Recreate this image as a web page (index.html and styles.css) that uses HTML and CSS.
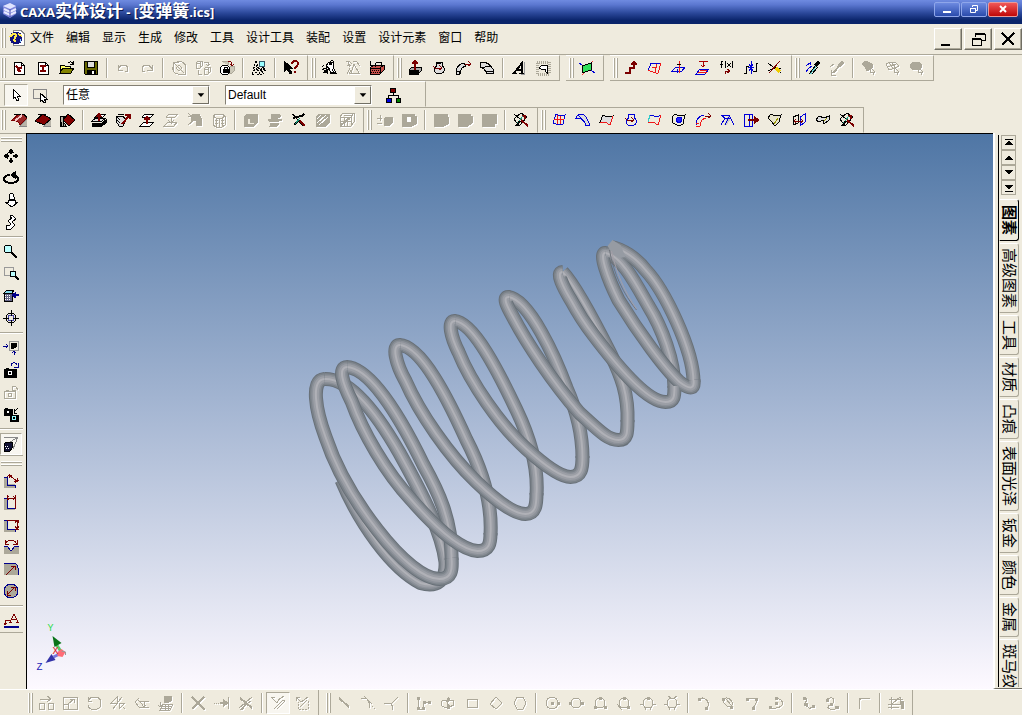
FILE: index.html
```html
<!doctype html>
<html lang="zh-CN">
<head>
    <meta charset="UTF-8">
    <meta name="viewport" content="width=device-width, initial-scale=1">
    <title>CAXA实体设计 - [变弹簧.ics]</title>
    <link rel="stylesheet" href="styles.css">
</head>
<body>
<header class="titlebar">
    <svg class="logo" viewBox="0 0 16 16"><path d="M1 4l7-3 6 3v8l-6 4-7-4z" fill="#7f86dc" stroke="none"/><path d="M1 4l7-3 6 3-6 3z" fill="#dfe4ff" stroke="none"/><path d="M2 7l6 3 6-3M2 10l6 3 6-3" stroke="#e8ebff" stroke-width="2"/><path d="M8 7v8" stroke="#4a4fae"/></svg>
    <h1><span>CAXA</span>实体设计<span> - [</span>变弹簧<span>.ics]</span></h1>
    <div class="winbtns">
        <button aria-label="最小化"><svg viewBox="0 0 16 12"><path d="M4 9h8" stroke-width="2"/></svg></button>
        <button aria-label="还原"><svg viewBox="0 0 16 12"><path d="M6.500 4V2.500h5v5H10M4.500 5.500h5v4h-5z"/><path d="M4 5.500h6"/></svg></button>
        <button class="close" aria-label="关闭"><svg viewBox="0 0 16 12"><path d="M5 3l6 6M11 3l-6 6" stroke-width="2"/></svg></button>
    </div>
</header>

<nav class="menubar">
    <span class="grip"></span>
    <svg class="ic" viewBox="0 0 16 16"><path d="M4 .5h8l3 3v12H4z" fill="#fff" stroke="#888"/><circle cx="7" cy="8" r="6" fill="#10107a" stroke="#10107a"/><path d="M1 7c3-4 6-4 6-2S4 9 6 12M9 4l4 2" stroke="#ffe94a" stroke-width="2"/><path d="M11 9v3" stroke="#8cf"/></svg>
    <ul class="menu">
        <li><a href="#">文件</a></li>
        <li><a href="#">编辑</a></li>
        <li><a href="#">显示</a></li>
        <li><a href="#">生成</a></li>
        <li><a href="#">修改</a></li>
        <li><a href="#">工具</a></li>
        <li><a href="#">设计工具</a></li>
        <li><a href="#">装配</a></li>
        <li><a href="#">设置</a></li>
        <li><a href="#">设计元素</a></li>
        <li><a href="#">窗口</a></li>
        <li><a href="#">帮助</a></li>
    </ul>
    <div class="docbtns">
        <button aria-label="最小化文档"><svg viewBox="0 0 20 16"><path d="M3 14h9" stroke-width="2"/></svg></button>
        <button aria-label="还原文档"><svg viewBox="0 0 20 16"><path d="M7 6V3h10v6h-4" /><path d="M7 3h10M4 8h9" stroke-width="2"/><path d="M4 8h9v6H4z"/></svg></button>
        <button aria-label="关闭文档"><svg viewBox="0 0 20 16"><path d="M4 2l12 12M16 2L4 14" stroke-width="2"/></svg></button>
    </div>
</nav>

<div class="row">
    <div class="bar" role="toolbar">
        <span class="grip"></span>
        <button aria-label="新建设计"><svg class="ic"><path class="fw" d="M3 2h7l3 3v9H3z"/><path d="M10 2v3h3"/><path class="r" d="M5 6l3 3 3-2M6 10l4 1M8 9v3" stroke-width="2"/></svg></button>
        <button aria-label="新建图纸"><svg class="ic"><path class="fw" d="M3 2h7l3 3v9H3z"/><path d="M10 2v3h3"/><path class="r" d="M5 6h6M5 11h6M8 6v5" stroke-width="2"/></svg></button>
        <button aria-label="打开"><svg class="ic"><path fill="#ff6" d="M1 13V5h4l1 1h5v3"/><path fill="#848400" d="M1 13l3-5h11l-3 5z"/><path d="M9 3c2-2 4-1 5 1M14 1v3h-3"/></svg></button>
        <button aria-label="保存"><svg class="ic"><path fill="#666600" d="M1 1h13v13H2l-1-1z"/><path fill="#ddd" d="M4 1h7v6H4z"/><path class="fk" d="M4 10h8v4H4z"/><path stroke="#fff" stroke-width="2" d="M10 11v3"/></svg></button>
        <i class="sep"></i>
        <button class="off" aria-label="撤销"><svg class="ic"><path d="M3 5v5h5M3 9c3-6 10-4 10 0 0 2-1 3-3 3"/></svg></button>
        <button class="off" aria-label="重做"><svg class="ic"><path d="M13 5v5H8M13 9C10 3 3 5 3 9c0 2 1 3 3 3"/></svg></button>
        <i class="sep"></i>
        <button class="off" aria-label="更新"><svg class="ic"><path d="M2 8V2h6M3 3l10 10M6 2c6-2 10 3 8 7M2 7c-1 5 3 8 8 7M14 8v6H8"/><path d="M5 8l3 3 3-3-3-3z"/></svg></button>
        <button class="off" aria-label="替换"><svg class="ic"><path d="M1 3l2-2h4v5l-2 2H1zM1 3h4l2-2M5 3v5M9 9l2-2h4v5l-2 2H9zM9 9h4l2-2M13 9v5M9 2h4v3M11 4l2 2 2-2M3 10v4h4"/></svg></button>
        <button aria-label="锁定"><svg class="ic"><path stroke="#aca899" fill="#ccc8b8" d="M3 2l2-1h4v4M10 8l2-2h3v5l-2 2h-3z"/><path class="r" d="M9 1c3 0 4 1 4 4M11 4l2 2 2-2"/><circle class="fw" cx="6" cy="10" r="5"/><path class="fk" d="M4 9h5v3H4z"/><path d="M5 9V7h3v2"/></svg></button>
        <i class="sep"></i>
        <button aria-label="查找"><svg class="ic"><path d="M5 1L1 14M5 1l4 13M3 9l3 5M7 9l-3 5M1 14h3M6 14h5M10 8l3 6M5 5v5" stroke-dasharray="2 1"/><path d="M8 8l5 6"/><circle cx="11" cy="4" r="3" fill="#9ff" stroke="#356"/><path d="M12 7l2 4" stroke-width="2"/></svg></button>
        <i class="sep"></i>
        <button aria-label="帮助指针"><svg class="ic"><path class="fk" d="M1 1v11l3-3 3 5 2-1-3-5h3z"/><path class="r" d="M9 4c0-4 6-4 6 0 0 2-3 2-3 5M12 11v2" stroke-width="2"/></svg></button>
    </div>
    <div class="bar" role="toolbar">
        <span class="grip"></span>
        <button aria-label="智能图素"><svg class="ic"><path class="fw" d="M5 6l3-4 4 1v4l3 6h-5l-2-4-3 2z"/><path d="M9 2l2-2 2 2-1 3M5 6l4 3M3 5L1 7M1 10l3-2 2 2M2 13l4-1M6 10l1 4M11 9l2 4"/><path d="M8 4h3M3 11h3M9 13h6" stroke-width="2"/></svg></button>
        <button class="off" aria-label="三维球"><svg class="ic"><path d="M1 2l3-1 3 3M2 5l4 1M9 4l5 9H6zM8 1l4 1 3 4M2 14l3-6M4 14l2-4M3 2l2 5"/></svg></button>
        <button aria-label="附着点"><svg class="ic"><path fill="#c8504a" d="M1 8l4-3h10v5l-4 4H1z"/><path d="M1 8h10l4-3M11 8v6M6 7V4l2-2h4v4"/><path d="M1 1v4h3"/><path d="M1 10h9M2 12h9" stroke-dasharray="1 1"/></svg></button>
    </div>
    <div class="bar" role="toolbar">
        <span class="grip"></span>
        <button aria-label="拉伸"><svg class="ic"><path fill="#aaa" d="M2 10l3-3h9v4l-3 3H2z"/><path class="fk" d="M2 10h9v4H2z"/><path class="r" d="M8 10V2M5 4l3-3 3 3" stroke-width="2"/></svg></button>
        <button aria-label="旋转"><svg class="ic"><path fill="#ddd" d="M5 2h6v3l2 3c1 3-1 6-5 6-3 0-6-2-4-6l2-3z"/><path d="M5 2c2 2 4 2 6 0"/><path class="r" d="M2 6c2 3 5 3 8 2M8 5l3 3-3 2"/></svg></button>
        <button aria-label="扫描"><svg class="ic"><path fill="#ddd" d="M1 13c0-5 3-9 8-10l2 3c-4 1-6 4-6 8l-3 1z"/><path d="M1 12l3-1 1 3"/><path class="r" d="M10 4h5M13 1l3 3-3 2"/></svg></button>
        <button aria-label="放样"><svg class="ic"><path fill="#ddd" d="M1 3c5-2 9 0 13 6l1 4-7 1C6 10 5 8 1 7z"/><path d="M4 8c3-2 5-2 8-1M7 12c3-2 5-1 8 0"/></svg></button>
        <i class="sep"></i>
        <button aria-label="文字"><svg class="ic"><path stroke="#999" d="M13 2v12h-3"/><path d="M3 13L11 3v10M6 10h5" stroke-width="2"/><path d="M1 13h5M8 13h5"/></svg></button>
        <button aria-label="加厚"><svg class="ic"><path stroke="#aca899" stroke-width="3" stroke-dasharray="1 1" d="M2 2h12v12H2z"/><path class="fw" d="M4 8l3-3h5v8l-2-2V9H6z"/></svg></button>
    </div>
    <div class="bar gap" role="toolbar">
        <span class="grip"></span>
        <button aria-label="二维草图"><svg class="ic"><path class="b" d="M0 3l16 10"/><path d="M14 1L3 15" stroke="#f33"/><path fill="#2fe05a" d="M3 6l9-3v7l-9 3z"/></svg></button>
    </div>
    <div class="bar gap" role="toolbar">
        <span class="grip"></span>
        <button aria-label="三维曲线"><svg class="ic"><path class="r" d="M2 13h5V8h4V3M8 5l3-3 3 3" stroke-width="2"/></svg></button>
        <button aria-label="曲面"><svg class="ic"><path class="b" d="M1 11L4 3l4 1 6-1"/><path class="red" d="M1 11c3-1 6 3 10 2l3-10M5 7h4V4M8 12l2-8"/></svg></button>
        <button aria-label="投影曲线"><svg class="ic"><path class="b" d="M1 11l4-4h9l-3 4zM6 13V9"/><path class="red" d="M8 1v12"/><path d="M6 4h4"/></svg></button>
        <button aria-label="等参数线"><svg class="ic"><path d="M4 1h9M8 2v5M6 5l2 2 2-2" stroke="#a00"/><path class="b" d="M1 14l4-5h9l-4 5z"/><path class="red" d="M3 12h9M5 10h7"/></svg></button>
        <button aria-label="公式曲线"><svg class="ic"><path d="M2 8V2l2-1M1 4h3M7 1L6 4l1 4M8 3l4 4M12 3L8 7M13 1l1 3-1 4"/><path class="r" d="M6 14v-3h4M8 9l3 2-3 2"/></svg></button>
        <button aria-label="组合曲线"><svg class="ic"><path d="M1 13h2V6h3M10 11h3V3h2"/><path class="b" d="M8 1v4M8 14v-4M6 4l2 3 2-3M6 11l2-3 2 3M5 7h6"/></svg></button>
        <button aria-label="裁剪曲线"><svg class="ic"><path d="M1 3l13 10M1 11l8-4M14 9l-5-1"/><path class="r" d="M13 1L2 13"/><path stroke="#ec0" stroke-width="3" d="M9 8l4 4"/></svg></button>
    </div>
    <div class="bar" role="toolbar">
        <span class="grip"></span>
        <button aria-label="拾取"><svg class="ic"><path class="b" d="M1 6l4-3M3 9l4-3M5 2v3M1 12l3-4"/><path stroke="#6cc" stroke-width="2" d="M5 14l6-8"/><path d="M4 14l7-9M7 14l6-7"/><path stroke-width="3" d="M10 6l4-4"/></svg></button>
        <button class="off" aria-label="应用"><svg class="ic"><path d="M1 7l4-3M2 10v5h5"/><path stroke-width="2" d="M4 13l8-9"/><path stroke-width="3" d="M10 6l4-4"/></svg></button>
        <i class="sep"></i>
        <button class="off" aria-label="选择体"><svg class="ic"><path class="fg" d="M1 4l4-3 6 3v4l-5 3-2-4z"/><path d="M9 7l5 5-2 1 1 2M9 7v6l3-1"/></svg></button>
        <button class="off" aria-label="选择面"><svg class="ic"><path d="M1 4l4-2 6 1 3 3-4 2-6 2zM4 3l4 5M2 7l9-3M6 2l5 6M9 7l5 5-2 1 1 2M9 7v6l3-1"/></svg></button>
        <button class="off" aria-label="选择边"><svg class="ic"><ellipse class="fg" cx="7" cy="6" rx="6" ry="4"/><path d="M9 7l5 5-2 1 1 2M9 7v6l3-1"/></svg></button>
    </div>
</div>

<div class="row">
    <div class="bar picks" role="toolbar">
        <button class="on" aria-label="选择"><svg class="ic"><path class="fw" d="M5 2v10l2-2 2 4 2-1-2-4h3z"/></svg></button>
        <button aria-label="框选"><svg class="ic"><path stroke="#888" d="M1 2h13v9H1z"/><path class="fw" d="M8 6v9l2-2 2 3 2-1-2-3h3z"/></svg></button>
        <span class="combo">
            <select aria-label="选择过滤"><option>任意</option></select>
            <span class="drop"><svg viewBox="0 0 16 16"><path class="fk" stroke="none" d="M5 6h7L8.500 10z"/></svg></span>
        </span>
        <span class="combo">
            <select aria-label="配置"><option>Default</option></select>
            <span class="drop"><svg viewBox="0 0 16 16"><path class="fk" stroke="none" d="M5 6h7L8.500 10z"/></svg></span>
        </span>
        <button aria-label="设计树"><svg class="ic"><path d="M8 5v3M3 11V8h10v3"/><path fill="#800000" d="M5 1h5v4H5z"/><path fill="#0000e0" d="M1 11h5v4H1z"/><path fill="#008000" d="M11 11h4v4h-4z"/></svg></button>
    </div>
</div>

<div class="row row3">
    <div class="bar" role="toolbar">
        <span class="grip"></span>
        <button aria-label="圆角过渡"><svg class="ic"><path fill="#b8b4a8" d="M9 14l7-7v7z" stroke="#888"/><path fill="#9c2828" stroke="#7b0000" d="M0 9l8-7h5l3 4-7 7c-1-4-4-5-9-4z"/><path d="M3 2h10M13 2l3 4"/><path stroke="#f3c8c8" stroke-width="2" d="M4 9l7-6"/></svg></button>
        <button aria-label="边倒角"><svg class="ic"><path fill="#b8b4a8" d="M9 14l7-7v7z" stroke="#888"/><path fill="#840000" d="M0 9l8-7 8 5-7 6z"/><path d="M3 2h8M0 9l9 4"/></svg></button>
        <button aria-label="面拔模"><svg class="ic"><path fill="#b8b4a8" d="M1 4v10h6l-3-5V4z"/><path fill="#840000" d="M4 8l5-6 7 6-6 6z"/><path d="M1 4h7M2 10v4M4 11v3"/></svg></button>
        <i class="sep"></i>
        <button aria-label="拉伸面"><svg class="ic"><path fill="#ddd" d="M1 9l4-3h10l-4 3z"/><path class="fk" d="M1 11h10l4-3v3l-4 3H1z"/><path class="fw" d="M4 5l3-3h8l-3 3z"/><path class="r" d="M8 9V3M6 5l2-3 2 3" stroke-width="2"/></svg></button>
        <button aria-label="拉伸曲面"><svg class="ic"><path fill="#ddd" d="M1 4h7l3 4-3 6H4L1 9z"/><path d="M1 4l4 4M1 7l4 4M3 2h6"/><path class="r" d="M7 12l7-8M10 3h5v4" stroke-width="2"/></svg></button>
        <button aria-label="移动面"><svg class="ic"><path class="fw" d="M1 14l4-4h10l-4 4zM3 5l3-3h9l-4 4z"/><path class="r" d="M8 12V6M5 8l3-3 3 3" stroke-width="2"/></svg></button>
        <button class="off" aria-label="匹配面"><svg class="ic"><path d="M1 14l4-4h9l-3 4zM3 5l3-3h9l-4 4zM8 12V6M5 8l3 3 3-3"/></svg></button>
        <button class="off" aria-label="等距面"><svg class="ic"><path class="fg" d="M5 3l7-1 2 4v7H9V9L4 8z"/><path d="M1 1l13 13M1 13L12 4M1 4h4"/></svg></button>
        <button class="off" aria-label="删除面"><svg class="ic"><path d="M2 4l3-2h6l3 2v9l-3 2H5l-3-2zM2 4l3 2h6l3-2M5 6v9M11 6v9M8 6v9"/><path d="M2 8h12M2 11h12" stroke-dasharray="1 1"/></svg></button>
        <i class="sep"></i>
        <button class="off" aria-label="抽壳"><svg class="ic"><path class="fg" d="M1 5l3-3h10v9l-3 3H1z"/><path fill="#efebde" d="M4 6h3v4h4v2H4z"/></svg></button>
        <button class="off" aria-label="截面"><svg class="ic"><path class="fg" d="M4 2h8l2 2-3 2H4zM1 7h12l2 1-3 1H2zM4 11h8l-2 3H3z"/></svg></button>
        <button aria-label="裁剪"><svg class="ic"><path d="M1 2l4 3 2 4 5 5"/><path d="M2 6l8-2M10 5l3-3M3 13l5-5" stroke-width="2"/><path class="r" d="M14 14l-5-5" stroke-width="2"/><path class="g" d="M4 12l5-6"/></svg></button>
        <button class="off" aria-label="分割"><svg class="ic"><path class="fg" d="M1 5l3-3h10v9l-3 3H1z"/><path stroke="#fff" d="M2 11l9-8M4 13l9-8M2 7l4-4"/></svg></button>
        <button class="off" aria-label="布尔"><svg class="ic"><path d="M1 5l3-4h11v9l-3 4H1zM1 5h11v9M12 5l3-4M5 5v9M8 5v9M1 9h11M5 3h8"/><path d="M2 13l9-7" stroke-width="2"/></svg></button>
    </div>
    <div class="bar" role="toolbar">
        <span class="grip"></span>
        <button class="off" aria-label="加减"><svg class="ic"><path d="M0 6h5M3 3v6M0 11h5"/><path class="fg" d="M7 7l2-2h6v6l-2 2H7z"/></svg></button>
        <button class="off" aria-label="相交"><svg class="ic"><path class="fg" d="M1 2h12v2h2v8l-4 2H1z"/><path fill="#fff" stroke="none" d="M6 5h4v5H6z"/></svg></button>
        <i class="sep"></i>
        <button class="off" aria-label="并"><svg class="ic"><path class="fg" d="M1 2h13l1 3v7l-4 2H1z"/></svg></button>
        <button class="off" aria-label="差"><svg class="ic"><path class="fg" d="M1 2h12v2h2v7l-4 3H1z"/></svg></button>
        <button class="off" aria-label="交"><svg class="ic"><path class="fg" d="M1 2h14v9h-2v3H1z"/></svg></button>
        <i class="sep"></i>
        <button aria-label="编辑特征"><svg class="ic"><path d="M1 7l7-6 6 4-8 9zM1 2l6 5"/><path class="r" d="M15 14L8 8M9 4h3v3" stroke-width="2"/><path class="g" d="M4 12l6-8"/><path d="M3 14l4-5" stroke-width="2"/></svg></button>
    </div>
    <div class="bar" role="toolbar">
        <span class="grip"></span>
        <button aria-label="直纹面"><svg class="ic"><path class="b" d="M2 11L5 2l4 2 5-1-2 9-4 1z"/><path class="red" d="M7 3L6 12M3 7l10 1M10 4l-1 8"/></svg></button>
        <button aria-label="网格面"><svg class="ic"><path class="b" d="M1 6c2-5 7-5 10-1l4 8-4 1c-1-6-5-8-10-8z" fill="#ddd"/><path class="b" d="M3 3l8 9"/></svg></button>
        <button aria-label="放样面"><svg class="ic"><path fill="#ddd" d="M1 10L4 3l4 2 6-1-3 9-5-3z"/><path class="red" d="M14 4l-3 9-5-3-5 0"/></svg></button>
        <button aria-label="旋转面"><svg class="ic"><path class="b" d="M5 2h6v3l2 3c1 3-1 6-5 6-3 0-6-2-4-6l2-3z"/><path class="r" d="M2 6c2 3 5 3 8 2M8 5l3 3-3 2"/></svg></button>
        <button aria-label="边界面"><svg class="ic"><path stroke="#3cc" d="M1 10L3 3"/><path class="b" d="M3 3l4 1 3 1 4-2"/><path class="red" d="M14 3l-3 10-5-3-5 1"/></svg></button>
        <button aria-label="填充面"><svg class="ic"><path d="M1 5l3-3 4 2 6-1-2 9-4 2-6-3z"/><path class="b" fill="#22f" d="M6 6l4-1 1 4-3 2-3-2z"/></svg></button>
        <button aria-label="导动面"><svg class="ic"><path class="b" d="M1 13c0-5 3-9 8-10"/><path class="red" d="M11 6c-4 1-6 4-6 8l-4 1M1 12l3-1"/><path class="r" d="M10 4h5M13 1l3 3-3 2"/></svg></button>
        <button aria-label="延伸面"><svg class="ic"><path fill="#ccc" stroke="none" d="M5 13L9 4l3 2-4 7z"/><path class="b" d="M2 3h8l5 10M2 3l4 3-4 7M6 6h5M6 13l4-8"/></svg></button>
        <button aria-label="偏移面"><svg class="ic"><path class="b" d="M1 2h8v12H1zM6 2v12"/><path class="r" d="M5 8h9M11 5l4 3-4 3" stroke-width="2"/></svg></button>
        <button aria-label="裁剪面"><svg class="ic"><path fill="#e8e4cc" d="M1 6l3-4 4 2 6-1-2 7-4 4-3-4z"/><path stroke="#990" d="M7 12l4-6"/></svg></button>
        <button aria-label="合并面"><svg class="ic"><path d="M2 13V5l5-2v8z"/><path class="b" d="M9 5l5-3v8l-5 4z"/><path class="r" d="M3 9h9M5 7L3 9l2 2M10 7l2 2-2 2"/></svg></button>
        <button aria-label="缝合面"><svg class="ic"><path fill="#ddd" d="M1 8l3-4 5 2 5-2v4l-5 4-1-4-4 2z"/><path stroke="#990" d="M9 9l3-3"/></svg></button>
        <button aria-label="编辑面"><svg class="ic"><path d="M1 7l7-6 6 4-8 9zM1 2l6 5"/><path class="r" d="M15 14L8 8M9 4h3v3" stroke-width="2"/><path class="g" d="M4 12l6-8"/><path d="M3 14l4-5" stroke-width="2"/></svg></button>
    </div>
</div>

<main class="work">
    <aside class="rail">
        <div class="vbar" role="toolbar">
            <span class="vgrip"></span>
            <button aria-label="平移"><svg class="ic"><path class="fk" d="M8 1l2 3H6zM8 15l2-3H6zM1 8l3-2v4zM15 8l-3-2v4z"/><path d="M8 3v3M8 10v3M3 8h3M10 8h3" stroke-width="2"/></svg></button>
            <button aria-label="动态旋转"><svg class="ic"><path d="M7 5C3 5 1 7 1 9c0 2 3 4 7 4s7-2 7-4c0-2-1-3-3-4" stroke-width="2"/><path class="fk" d="M8 5l4-3v6z"/></svg></button>
            <button aria-label="前后缩放"><svg class="ic"><path class="fw" d="M6 5c0-5 5-5 5 0v2H6zM5 8h7v2h3l-6 5-7-5h3z"/></svg></button>
            <button aria-label="任意视向"><svg class="ic"><path class="fw" d="M7 5V2l2-1 4 4-4 3 3 3-4 4H3v-3l4-1 1-1-3-3 4-3-1-1z"/></svg></button>
            <i class="hsep"></i>
            <button aria-label="动态缩放"><svg class="ic"><circle cx="5" cy="5" r="4" fill="#bff"/><path d="M8 8l6 6" stroke-width="2"/></svg></button>
            <button aria-label="窗口缩放"><svg class="ic"><path stroke="#999" d="M1 1h9v8H1z"/><circle cx="10" cy="8" r="3" fill="#bff"/><path d="M12 10l4 4" stroke-width="2"/></svg></button>
            <button aria-label="指定面"><svg class="ic"><path fill="#8de" d="M1 5l3-3h7L9 5z"/><path fill="#668" d="M1 5h8v8H1z"/><path stroke="#fff" stroke-dasharray="1 1" d="M2 7h6M2 9h6M2 11h6"/><path class="nb" d="M11 7h5M13 5l-3 2 3 3" stroke-width="2"/></svg></button>
            <button aria-label="目标"><svg class="ic"><circle cx="8" cy="8" r="5"/><circle cx="8" cy="8" r="3" stroke="#44a"/><path d="M8 0v6M8 10v6M0 8h6M10 8h6"/></svg></button>
            <i class="hsep"></i>
            <button aria-label="显示全部"><svg class="ic"><path stroke="#999" d="M6 1h9v9H6z"/><path class="fk" d="M8 4l2-1h3v4l-2 1H8z"/><path class="nb" d="M0 6h5M3 4l2 2-2 2M11 15v-4M9 13l2-2 2 2"/></svg></button>
            <button aria-label="保存视向"><svg class="ic"><path class="fk" d="M1 7h12v8H1z"/><path d="M3 6h3"/><circle cx="7" cy="11" r="2" stroke="#fff"/><path class="nb" d="M8 4c0-4 5-4 6-1M15 1v4h-4"/></svg></button>
            <button class="off" aria-label="恢复视向"><svg class="ic"><path d="M1 7h11v7H1zM3 6h3M9 2v4h4M9 5c0-4 6-3 5 1"/><circle cx="7" cy="11" r="2"/></svg></button>
            <button aria-label="取回视向"><svg class="ic"><path class="fk" d="M1 3h8v6H1zM7 9h9v6H7z"/><path d="M2 2h3M15 2l-4 4M11 3v4h3"/><circle cx="5" cy="6" r="1" stroke="#fff"/><circle cx="11" cy="12" r="2" stroke="#9ff"/></svg></button>
            <i class="hsep"></i>
            <button class="on" aria-label="透视"><svg class="ic"><path stroke="#888" d="M1 1h14M15 1L4 8M15 1l-5 12"/><path fill="#113" d="M1 8l2-2h6v6l-2 3H1z"/><path stroke="#fff" stroke-dasharray="1 1" d="M2 10h4M3 12h4"/></svg></button>
        </div>
        <div class="vbar dims" role="toolbar">
            <span class="vgrip"></span>
            <button aria-label="智能标注"><svg class="ic"><path class="fs" d="M1 4h3v7h8v4H1z"/><path class="nb" d="M1 4h3v8h8v3"/><path class="r" d="M4 4l3-3M12 10l4-3M6 2l8 6M6 5V2h3M11 8h3V5"/></svg></button>
            <button aria-label="水平标注"><svg class="ic"><path class="fs" d="M1 3h3v10h8v2H1z"/><path class="nb" d="M1 3h3v10h8"/><path class="r" d="M4 0v5M12 0v14M4 3h8M6 1L4 3l2 2M10 1l2 2-2 2"/></svg></button>
            <button aria-label="垂直标注"><svg class="ic"><path class="fs" d="M1 3h3v9h8v3H1z"/><path class="nb" d="M1 3h3v9h8v3"/><path class="r" d="M4 3h12M12 12h4M14 3v9M12 6l2-3 2 3M12 9l2 3 2-3"/></svg></button>
            <button aria-label="角度标注"><svg class="ic"><path class="fs" d="M1 7h3l4 5 4-5h4v8H1z"/><path class="nb" d="M1 7h3l4 5 4-5h4"/><path class="r" d="M2 5c3-5 9-5 12 0M2 1v4h4M14 1v4h-4"/></svg></button>
            <button aria-label="半径标注"><svg class="ic"><path class="fs" d="M1 2h9c3 0 5 2 5 5v7H1z"/><path class="nb" d="M1 2h9c3 0 5 2 5 5v7"/><path class="r" d="M3 14l9-9M8 5h4v4"/></svg></button>
            <button aria-label="直径标注"><svg class="ic"><circle class="fs nb" cx="8" cy="8" r="7"/><path class="r" d="M4 12l8-8M8 4h4v4M4 8v4h4"/></svg></button>
            <i class="hsep"></i>
            <button aria-label="文字注释"><svg class="ic"><path class="nb" d="M1 14h15" stroke-width="2"/><path class="r" d="M7 9l4-8 4 8M8 6h6M6 9h3M13 9h3M8 7H2v5M1 10l1 2 2-2"/></svg></button>
        </div>
    </aside>

    <section class="view">
        <svg class="scene" viewBox="28 134 965 555">
            <defs>
                <path id="start" d="M342 480C360 523 392 568 421 583C438 588 447 580 446 562C443 535 425 498 400 453C380 418 352 378 325 379"/>
                <g id="backs">
                    <path d="M452 560C453 520 438 490 424 465C407 430 374 368 347 367"/>
                    <path d="M491 535C493 500 481 467 467 440C449 400 422 346 400 345"/>
                    <path d="M537 495C539 465 529 435 517 410C500 374 474 322 455 321"/>
                    <path d="M583 458C583 430 576 408 567 388C556 358 530 300 509 297"/>
                    <path d="M628 422C629 395 622 376 611 354C600 332 578 288 563 272"/>
                    <path d="M675 388C675 360 662 327 649 306C638 287 622 255 606 253"/>
                    <path d="M694 382C694 350 665 290 646 270C636 257 622 249 612 247"/>
                </g>
                <g id="fronts">
                    <path d="M325 379C311 380 316 410 326 437C337 470 356 502 378 530C402 561 425 579 440 579C452 579 453 570 452 558"/>
                    <path d="M348 367C338 367 343 383 352 401C363 432 386 472 412 500C440 532 462 550 478 551C490 551 491 543 491 533"/>
                    <path d="M401 345C391 344 397 365 406 381C420 413 449 455 477 482C500 504 516 514 526 514C536 514 537 505 537 493"/>
                    <path d="M456 321C447 320 452 338 459 352C471 382 500 425 527 449C548 468 562 477 571 477C582 477 583 468 583 456"/>
                    <path d="M510 297C502 296 508 307 513 316C527 343 553 382 580 413C600 431 608 440 619 440C628 440 628 432 628 420"/>
                    <path d="M563 272C556 272 564 288 572 301C580 316 587 326 594 335C619 368 648 402 666 402C675 402 675 396 675 386"/>
                    <path d="M606 253C599 252 608 278 619 300C640 334 665 368 680 382C692 391 695 388 694 380"/>
                </g>
            </defs>
            <g class="tube">
                <use href="#start" class="t1"/><use href="#start" class="t2"/><use href="#start" class="t3"/><use href="#start" class="t4"/><use href="#start" class="t5"/>
            </g>
            <g class="tube">
                <use href="#backs" class="t1"/><use href="#backs" class="t2"/><use href="#backs" class="t3"/><use href="#backs" class="t4"/><use href="#backs" class="t5"/>
            </g>
            <g class="tube">
                <use href="#fronts" class="t1"/><use href="#fronts" class="t2"/><use href="#fronts" class="t3"/><use href="#fronts" class="t4"/><use href="#fronts" class="t5"/>
            </g>
            <path d="M608 246l5-6 8 5 5 12-6 1-7-4z" fill="#969ba3" stroke="none"/>
            <path d="M610 250c4 24 14 44 27 60" stroke="#70747c"/>
            <path d="M612 251c5 22 13 41 25 58" stroke="#a49fa7"/>
            <g class="axes">
                <path d="M63 654l-7-11" stroke="#55cc66" stroke-width="3"/>
                <path d="M53 636l9 7-7 4z" fill="#087318" stroke="none"/>
                <path d="M62 653l-8 4" stroke="#7777dd" stroke-width="3"/>
                <path d="M46 663l6-9 4 6z" fill="#3434a8" stroke="none"/>
                <path d="M58 652l4-3 4 3-3 5-5-1z" fill="#ff6b76" stroke="none"/>
                <path d="M62 651l4 1v3" stroke="#999"/>
                <text x="48" y="631" fill="#2fdc4a">Y</text>
                <text x="53" y="654" fill="#d8101c">X</text>
                <text x="37" y="670" fill="#1c1cb8">Z</text>
            </g>
        </svg>
    </section>

    <aside class="catalog">
        <div class="tabnav">
            <button aria-label="第一个"><svg viewBox="0 0 12 12"><path d="M2 2h8"/><path class="fk" stroke="none" d="M6 3l4 5H2z"/></svg></button>
            <button aria-label="上一个"><svg viewBox="0 0 12 12"><path class="fk" stroke="none" d="M6 3l4 5H2z"/></svg></button>
            <button aria-label="下一个"><svg viewBox="0 0 12 12"><path class="fk" stroke="none" d="M6 8l4-5H2z"/></svg></button>
            <button aria-label="最后一个"><svg viewBox="0 0 12 12"><path class="fk" stroke="none" d="M6 8l4-5H2z"/><path d="M2 9h8"/></svg></button>
        </div>
        <div class="tabs" role="tablist">
            <button role="tab" class="cur">图素</button>
            <button role="tab">高级图素</button>
            <button role="tab">工具</button>
            <button role="tab">材质</button>
            <button role="tab">凸痕</button>
            <button role="tab">表面光泽</button>
            <button role="tab">钣金</button>
            <button role="tab">颜色</button>
            <button role="tab">金属</button>
            <button role="tab">斑马纹</button>
        </div>
    </aside>
</main>

<footer class="row sketch">
    <div class="bar" role="toolbar">
        <span class="grip"></span>
        <button class="off" aria-label="移动"><svg class="ic"><path d="M1 8h5v6H1zM10 8h5v6h-5zM2 4h10M9 1l4 3-4 3"/></svg></button>
        <button class="off" aria-label="缩放"><svg class="ic"><path d="M1 2h14v12H1zM1 9h5v5M6 9l6-5M8 4h4v4"/></svg></button>
        <button class="off" aria-label="旋转草图"><svg class="ic"><path d="M2 2v4h4M2 6c3-6 13-5 13 2 0 8-12 9-13 2"/></svg></button>
        <button class="off" aria-label="镜像"><svg class="ic"><path d="M3 14L12 2M1 8l6-6v6zM9 8h6l-6 6zM13 12l2 2"/></svg></button>
        <button class="off" aria-label="偏置"><svg class="ic"><path d="M1 7l4-4M1 7l4 5h10M6 6h9M10 6v6M8 10l2 2 2-2M4 5l5 5"/></svg></button>
        <button class="off" aria-label="投影"><svg class="ic"><path class="fg" d="M6 2l2-1h5v5l-2 1H6z"/><path d="M2 7v5M0 10l2 2 2-2M5 9h10l-3 6H2zM4 11h10M3 13h10M7 9v6M10 9v6"/></svg></button>
        <i class="sep"></i>
        <button class="off" aria-label="打断"><svg class="ic"><path d="M2 2l13 13M14 2L2 14" stroke-width="2"/></svg></button>
        <button class="off" aria-label="延长"><svg class="ic"><path d="M14 2v12"/><path d="M0 8h6" stroke-dasharray="1 1"/><path d="M6 8h8M9 5l4 3-4 3" stroke-width="2"/></svg></button>
        <button class="off" aria-label="裁剪草图"><svg class="ic"><path d="M1 13L14 2M5 12l8-6"/><path d="M2 3l6 5 6 5M3 15l6-7" stroke-width="2"/></svg></button>
        <i class="sep"></i>
        <button class="off on" aria-label="显示曲线尺寸"><svg class="ic"><path d="M2 3l5 5 3-5M1 2h4M10 4l4-3M4 14l9-9M7 14l8-8M12 5h3"/></svg></button>
        <button class="off" aria-label="显示端点"><svg class="ic"><path d="M2 2l5 5 7-5M2 2h4M2 2v4"/><path d="M14 6v8H4V7M4 14l9-9" stroke-dasharray="2 1"/></svg></button>
    </div>
    <div class="bar wide" role="toolbar">
        <span class="grip"></span>
        <button class="off" aria-label="两点线"><svg class="ic"><path d="M3 3l10 9" stroke-width="2"/></svg></button>
        <button class="off" aria-label="切线"><svg class="ic"><path d="M1 3h5c3 3 4 7 4 10M4 1l8 8"/><path d="M12 11l3 3" stroke-dasharray="1 2"/></svg></button>
        <button class="off" aria-label="法线"><svg class="ic"><path d="M0 8h5c3 1 4 3 4 7M7 9l7-7"/></svg></button>
        <i class="sep"></i>
        <button class="off" aria-label="连续直线"><svg class="ic"><path d="M2 3v11h5V7h8"/><path stroke-width="3" d="M1 3h3M1 13h3M6 13h3M7 7h3M12 7h3"/></svg></button>
        <button class="off" aria-label="连续圆弧"><svg class="ic"><path d="M7 12H4c-4-1-3-7 0-7s5 3 3 7M7 8c0-4 7-4 7 0s-6 4-6 1M8 2v5"/><path stroke-width="3" d="M7 4h3M7 12h3"/></svg></button>
        <button class="off" aria-label="矩形"><svg class="ic"><path d="M3 4h10v8H3z"/></svg></button>
        <button class="off" aria-label="三点矩形"><svg class="ic"><path d="M2 9l6-7 6 6-6 6z"/></svg></button>
        <button class="off" aria-label="多边形"><svg class="ic"><path d="M5 2h6l3 6-3 6H5L2 8z"/></svg></button>
        <i class="sep"></i>
        <button class="off" aria-label="圆心半径"><svg class="ic"><circle cx="8" cy="8" r="6"/><path stroke-width="3" d="M7 8h3M13 8h3"/></svg></button>
        <button class="off" aria-label="两点圆"><svg class="ic"><circle cx="8" cy="8" r="5"/><path stroke-width="3" d="M1 8h3M12 8h4"/></svg></button>
        <button class="off" aria-label="三点圆"><svg class="ic"><circle cx="8" cy="8" r="5"/><path stroke-width="3" d="M7 3h3M2 12h3M12 12h3"/></svg></button>
        <button class="off" aria-label="一切点圆"><svg class="ic"><circle cx="8" cy="8" r="5"/><path stroke-width="3" d="M7 3h3M11 12h3"/><path d="M1 9l5 6"/></svg></button>
        <button class="off" aria-label="两切点圆"><svg class="ic"><circle cx="8" cy="8" r="5"/><path stroke-width="3" d="M7 3h3"/><path d="M0 9h3l3 6M16 9h-3l-3 6"/></svg></button>
        <button class="off" aria-label="三切点圆"><svg class="ic"><circle cx="8" cy="8" r="5"/><path d="M4 1l3 2h3l3-2M0 9h3l3 6M16 9h-3l-3 6"/></svg></button>
        <i class="sep"></i>
        <button class="off" aria-label="两点弧"><svg class="ic"><path d="M3 4c5-3 12 2 8 9"/><path stroke-width="3" d="M2 4h3M9 13h3"/></svg></button>
        <button class="off" aria-label="三点弧"><svg class="ic"><path d="M3 4c0 5 4 8 8 8M3 4c5-3 12 2 8 8M6 4l5 6"/><path stroke-width="3" d="M2 4h3M10 12h3"/></svg></button>
        <button class="off" aria-label="圆弧"><svg class="ic"><path d="M3 4c5-2 11 0 10 2s-2 5-4 7"/><path stroke-width="3" d="M2 4h3M11 4h3M8 13h3"/></svg></button>
        <button class="off" aria-label="圆心弧"><svg class="ic"><path d="M8 3c9 2 8 9 0 10H3"/><path stroke-width="3" d="M7 3h3M7 8h3M1 12h3"/></svg></button>
        <i class="sep"></i>
        <button class="off" aria-label="样条"><svg class="ic"><path d="M4 3c8-1-3 7 2 8s1 5 6 1"/><path stroke-width="3" d="M3 3h3M5 9h3M12 11h3"/></svg></button>
        <button class="off" aria-label="贝塞尔"><svg class="ic"><path d="M3 4c8-4 9 3 3 6s2 6 7 3"/><path stroke-width="3" d="M2 5h3M6 9h3M11 12h4"/></svg></button>
        <i class="sep"></i>
        <button class="off" aria-label="过渡"><svg class="ic"><path d="M3 14V8c0-4 2-5 5-5h6M3 7V3h4"/></svg></button>
        <i class="sep"></i>
        <button class="off" aria-label="构造线"><svg class="ic"><path d="M3 2v12M0 9h16M1 4h14M0 12h11M12 2v8M4 9l8-7"/><path stroke-width="3" d="M14 6v8"/></svg></button>
    </div>
</footer>
</body>
</html>
```
FILE: styles.css
```css
*{
    margin: 0;
    padding: 0;
    box-sizing: border-box;
}
body{
    display: flex;
    flex-direction: column;
    height: 100vh;
    overflow: hidden;
    background: #efebde;
    font: 12px/16px "Liberation Sans", "Noto Sans CJK SC", sans-serif;
    color: #000;
}
button{
    border: 0;
    background: none;
    font: inherit;
    color: inherit;
}
svg{
    display: block;
    fill: none;
    stroke: #000;
}
.ic{
    width: 16px;
    height: 16px;
    flex: none;
    shape-rendering: crispEdges;
}

/* icon colours */
.r{ stroke: #7b0000; }
.red{ stroke: #f01818; }
.b{ stroke: #0000d8; }
.nb{ stroke: #00008c; }
.g{ stroke: #1c9c7c; }
.fw{ fill: #fff; }
.fk{ fill: #000; }
.fg{ fill: #aca899; }
.fs{ fill: #aca899; }
path.fs{ stroke: none; }
.off svg{
    stroke: #aca899;
    filter: drop-shadow(1px 1px 0 #fff);
}

/* title bar */
.titlebar{
    display: flex;
    align-items: flex-start;
    height: 24px;
    flex: none;
    padding: 2px 4px 0 2px;
    background: linear-gradient(#6f8be0, #5b77d0 20%, #2a4799 55%, #0a246a 85%, #0a246a);
    color: #fff;
}
.logo{
    width: 16px;
    height: 16px;
}
.titlebar h1{
    margin-left: 2px;
    font: bold 17px/16px "Noto Sans CJK SC", sans-serif;
    white-space: pre;
    text-shadow: 1px 1px 0 #0a1a50;
}
.titlebar h1 span{
    font: bold 13px/16px "Open Sans", sans-serif;
}
.winbtns{
    display: flex;
    gap: 1px;
    margin-left: auto;
}
.winbtns button{
    display: flex;
    justify-content: center;
    width: 26px;
    height: 15px;
    border: 1px solid #8fa6ea;
    border-radius: 2px;
    background: linear-gradient(#6d8ae0, #2a4bac);
}
.winbtns svg{
    width: 16px;
    height: 12px;
    stroke: #fff;
}
.winbtns .close{
    width: 30px;
    border-color: #e89a9a;
    background: linear-gradient(#f05858, #c00808);
}

/* menu */
.menubar{
    display: flex;
    align-items: center;
    height: 31px;
    flex: none;
    padding-bottom: 3px;
    border-bottom: 1px solid #aca899;
}
.menubar .ic{
    margin: 0 5px 0 2px;
}
.menu{
    display: flex;
    gap: 12px;
    list-style: none;
}
.menu a{
    color: #000;
    text-decoration: none;
}
.docbtns{
    display: flex;
    gap: 2px;
    margin-left: auto;
    padding-top: 3px;
}
.docbtns button{
    display: flex;
    align-items: center;
    justify-content: center;
    width: 28px;
    height: 22px;
    border: 1px solid;
    border-color: #fff #716f64 #716f64 #fff;
    box-shadow: inset -1px -1px 0 #aca899;
}
.docbtns svg{
    width: 20px;
    height: 16px;
    shape-rendering: crispEdges;
}

/* toolbars */
.row{
    display: flex;
    height: 26px;
    flex: none;
}
.bar{
    display: flex;
    align-items: center;
    padding: 0 4px 0 2px;
    border-top: 1px solid #fff;
    border-right: 1px solid #aca899;
    border-bottom: 1px solid #aca899;
}
.bar:first-child{
    padding-left: 0;
}
.row3 .bar{
    border-top-color: #aca899;
    border-bottom-color: #efebde;
}
.bar.gap{
    margin-left: 6px;
}
.bar.wide{
    padding-left: 6px;
}
.grip{
    width: 5px;
    height: 20px;
    margin: 0 1px;
    flex: none;
    background: linear-gradient(90deg, #fff 0 1px, #aca899 1px 2px, #efebde 2px 3px, #fff 3px 4px, #aca899 4px 5px);
}
.bar button{
    display: flex;
    align-items: center;
    justify-content: center;
    width: 24px;
    height: 22px;
    flex: none;
}
.sep{
    width: 2px;
    height: 20px;
    margin: 0 3px;
    border-left: 1px solid #aca899;
    border-right: 1px solid #fff;
}
.bar .on,
.vbar .on{
    border: 1px solid;
    border-color: #aca899 #fff #fff #aca899;
    background: #f8f6f0;
}
.bar.picks{
    padding: 2px 20px 0 4px;
    border-bottom-color: #efebde;
}
.combo{
    position: relative;
    width: 147px;
    margin-right: 15px;
}
.picks button + .combo{
    margin-left: 11px;
}
.combo + button{
    margin-left: -6px;
}
.combo select{
    display: block;
    width: 100%;
    height: 20px;
    padding: 0 20px 0 2px;
    appearance: none;
    border: 1px solid;
    border-color: #848074 #fff #fff #848074;
    border-radius: 0;
    background: #fff;
    font: inherit;
    color: #000;
}
.drop{
    position: absolute;
    top: 1px;
    right: 1px;
    width: 17px;
    height: 18px;
    border: 1px solid;
    border-color: #fff #716f64 #716f64 #fff;
    background: #efebde;
    pointer-events: none;
}
.drop svg{
    width: 15px;
    height: 16px;
}

/* work area */
.work{
    display: flex;
    flex: 1;
    min-height: 0;
}
.rail{
    width: 26px;
    flex: none;
    border-top: 1px solid #aca899;
}
.vbar{
    display: flex;
    flex-direction: column;
    width: 23px;
    border-bottom: 1px solid #aca899;
}
.vbar button{
    display: flex;
    align-items: center;
    justify-content: center;
    width: 22px;
    height: 22px;
    flex: none;
}
.vgrip{
    width: 21px;
    height: 5px;
    margin: 3px 1px;
    background: linear-gradient(#fff 0 1px, #aca899 1px 2px, #efebde 2px 3px, #fff 3px 4px, #aca899 4px 5px);
}
.dims .vgrip{
    margin: 5px 1px 4px;
}
.hsep{
    width: 23px;
    height: 2px;
    margin: 3px 0;
    border-top: 1px solid #aca899;
    border-bottom: 1px solid #fff;
}
.view{
    flex: 1;
    min-width: 0;
    border-top: 1px solid #000;
    border-left: 1px solid #000;
    background: linear-gradient(#4f76a5, #a6b7d3 50%, #fdf9ff);
}
.scene{
    width: 100%;
    height: 100%;
}
.tube{
    stroke-linejoin: round;
}
.t1{ stroke: #687078; stroke-width: 14px; }
.t2{ stroke: #7b8289; stroke-width: 12px; }
.t3{ stroke: #8c9199; stroke-width: 9px; }
.t4{ stroke: #9c9fa6; stroke-width: 6px; }
.t5{ stroke: #b0b1b7; stroke-width: 2px; }
.axes text{
    font: 10px "Liberation Mono", monospace;
    stroke: none;
}

/* catalog tabs */
.catalog{
    display: flex;
    flex-direction: column;
    width: 29px;
    flex: none;
    padding: 2px 3px 1px;
    border-left: 2px solid #fff;
    border-bottom: 1px solid #716f64;
    overflow: hidden;
}
.tabnav{
    display: flex;
    flex-direction: column;
    height: 64px;
    flex: none;
    padding-left: 2px;
    border-left: 1px solid #000;
}
.tabnav button{
    display: flex;
    align-items: center;
    justify-content: center;
    width: 15px;
    height: 15px;
    border: 1px solid;
    border-color: #fff #404040 #404040 #fff;
    outline: 1px solid #aca899;
    outline-offset: -1px;
}
.tabnav svg{
    width: 12px;
    height: 12px;
    shape-rendering: crispEdges;
}
.tabs{
    display: flex;
    flex-direction: column;
    gap: 2px;
    flex: 1;
    min-height: 0;
    overflow: hidden;
    border-left: 1px solid #000;
}
.tabs button{
    width: 20px;
    flex: none;
    padding: 4px 0;
    border: 1px solid;
    border-color: #fff #aca899 #aca899 #efebde;
    border-radius: 0 3px 3px 0;
    font-size: 15px;
    line-height: 18px;
    writing-mode: vertical-rl;
    text-orientation: sideways;
}
.tabs .cur{
    padding: 5px 0;
    border-color: #fff #000 #000 #efebde;
    font-weight: bold;
}

/* sketch toolbar */
.sketch{
    padding-left: 27px;
    border-top: 1px solid #fff;
}
.sketch .bar{
    border-top: 0;
    border-bottom: 0;
}
```
